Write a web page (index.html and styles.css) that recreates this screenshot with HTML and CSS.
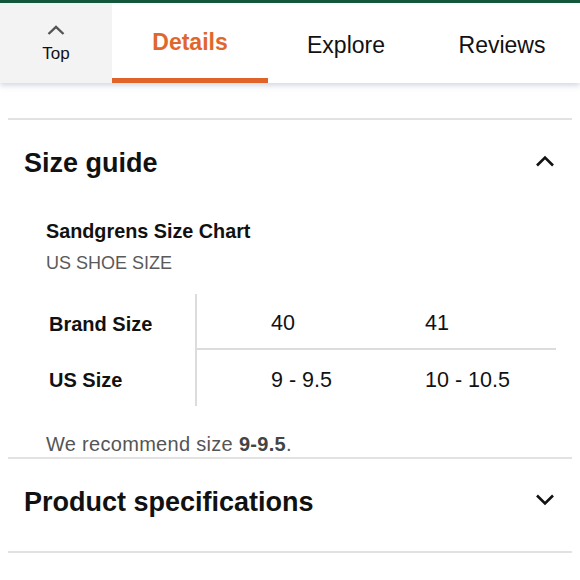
FILE: index.html
```html
<!DOCTYPE html>
<html lang="en">
<head>
<meta charset="utf-8">
<title>Size guide</title>
<link rel="stylesheet" href="styles.css">
</head>
<body>
<div class="topbar"></div>
<nav class="tabs">
  <div class="top-btn">
    <svg class="top-chev" width="18" height="10" viewBox="0 0 18 10"><path d="M1.5 9 L9 1.8 L16.5 9" fill="none" stroke="#555" stroke-width="2.4"/></svg>
    <span class="top-label">Top</span>
  </div>
  <div class="tab active">Details</div>
  <div class="tab">Explore</div>
  <div class="tab">Reviews</div>
</nav>
<main class="page">
  <section class="section open">
    <div class="sec-head">
      <h2 class="sec-title">Size guide</h2>
      <svg class="chev" width="20" height="12" viewBox="0 0 20 12"><path d="M2 10.5 L10 2.5 L18 10.5" fill="none" stroke="#111" stroke-width="2.6"/></svg>
    </div>
    <div class="sec-body">
      <div class="chart-title">Sandgrens Size Chart</div>
      <div class="chart-sub">US SHOE SIZE</div>
      <div class="size-table">
        <div class="lbl">Brand Size</div>
        <div class="val top-row">40</div>
        <div class="val top-row">41</div>
        <div class="lbl">US Size</div>
        <div class="val">9 - 9.5</div>
        <div class="val">10 - 10.5</div>
      </div>
      <p class="rec">We recommend size <b>9-9.5</b>.</p>
    </div>
  </section>
  <section class="section closed">
    <div class="sec-head">
      <h2 class="sec-title">Product specifications</h2>
      <svg class="chev" width="20" height="12" viewBox="0 0 20 12"><path d="M2 1.5 L10 9.5 L18 1.5" fill="none" stroke="#111" stroke-width="2.6"/></svg>
    </div>
  </section>
  <div class="end-line"></div>
</main>
</body>
</html>
```

FILE: styles.css
```css
html, body {
  margin: 0;
  padding: 0;
  background: #fff;
  font-family: "Liberation Sans", Arial, sans-serif;
  color: #111;
}

.topbar {
  height: 3px;
  background: #14573a;
}

.tabs {
  display: flex;
  height: 80px;
  background: #fff;
  box-shadow: 0 3px 5px rgba(110, 130, 160, 0.28);
  position: relative;
}

.top-btn {
  width: 112px;
  background: #f3f3f3;
  display: flex;
  flex-direction: column;
  align-items: center;
  justify-content: flex-start;
  padding-top: 22px;
  box-sizing: border-box;
}

.top-chev {
  display: block;
}

.top-label {
  font-size: 17px;
  line-height: 20px;
  margin-top: 9px;
  color: #111;
}

.tab {
  flex: 1;
  display: flex;
  align-items: center;
  justify-content: center;
  font-size: 23px;
  color: #111;
  box-sizing: border-box;
  padding-top: 9px;
  padding-bottom: 5px;
}

.tab.active {
  color: #e0672c;
  font-weight: bold;
  border-bottom: 5px solid #e0632a;
  padding-top: 8px;
  padding-bottom: 4px;
}

.page {
  padding: 35px 8px 0;
}

.section {
  border-top: 2px solid #e2e2e2;
}

.sec-head {
  height: 82px;
  display: flex;
  align-items: center;
  justify-content: space-between;
  padding: 0 17px 0 16px;
}

.sec-title {
  margin: 0;
  font-size: 27px;
  font-weight: bold;
  color: #111;
  position: relative;
  top: 2px;
}

.chev {
  display: block;
}

.sec-body {
  padding: 13px 0 0 38px;
}

.chart-title {
  font-size: 19.8px;
  font-weight: bold;
  line-height: 32px;
}

.chart-sub {
  font-size: 18px;
  line-height: 32px;
  color: #5a5a5a;
}

.size-table {
  margin-top: 15px;
  display: grid;
  grid-template-columns: 151px 154px 205px;
  grid-auto-rows: 56px;
}

.lbl {
  font-size: 20px;
  font-weight: bold;
  padding-left: 3px;
  padding-top: 4px;
  display: flex;
  align-items: center;
  border-right: 2px solid #dcdcdc;
  box-sizing: border-box;
}

.val {
  font-size: 21.5px;
  padding-left: 74px;
  padding-top: 5px;
  display: flex;
  align-items: center;
  box-sizing: border-box;
  color: #111;
}

.val.top-row {
  border-bottom: 2px solid #dcdcdc;
}

.rec {
  margin: 21px 0 0;
  font-size: 20px;
  letter-spacing: 0.3px;
  line-height: 30px;
  color: #555;
  position: relative;
  top: 2px;
}

.rec b {
  color: #444;
}

.section.closed {
  padding-bottom: 10px;
}

.end-line {
  border-top: 2px solid #e2e2e2;
  height: 26px;
}
```
